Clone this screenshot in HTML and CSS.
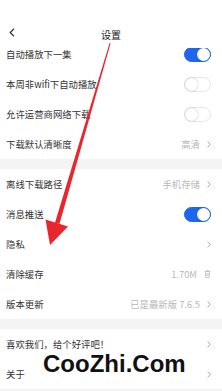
FILE: index.html
```html
<!DOCTYPE html>
<html lang="zh">
<head>
<meta charset="utf-8">
<link rel="stylesheet" href="styles.css">
</head>
<body>
<div class="screen">
  <header class="header">
    <svg class="back" width="6" height="9" viewBox="0 0 6 9"><polyline points="5,0.8 1.2,4.5 5,8.2" fill="none" stroke="#333" stroke-width="1.2"/></svg>
    <div class="title">设置</div>
  </header>
  <div class="viewport">
    <div class="scroller">
      <section class="group">
        <div class="row"><span class="label">自动播放下一集</span><span class="switch on"><i></i></span></div>
        <div class="row"><span class="label">本周非wifi下自动播放</span><span class="switch"><i></i></span></div>
        <div class="row"><span class="label">允许运营商网络下载</span><span class="switch"><i></i></span></div>
        <div class="row"><span class="label">下载默认清晰度</span><span class="value">高清<svg class="chev" width="4" height="7" viewBox="0 0 4 7"><polyline points="0.6,0.6 3.3,3.5 0.6,6.4" fill="none" stroke="#aaa" stroke-width="1"/></svg></span></div>
      </section>
      <section class="group">
        <div class="row"><span class="label">离线下载路径</span><span class="value">手机存储<svg class="chev" width="4" height="7" viewBox="0 0 4 7"><polyline points="0.6,0.6 3.3,3.5 0.6,6.4" fill="none" stroke="#aaa" stroke-width="1"/></svg></span></div>
        <div class="row"><span class="label">消息推送</span><span class="switch on"><i></i></span></div>
        <div class="row"><span class="label">隐私</span><span class="value"><svg class="chev" width="4" height="7" viewBox="0 0 4 7"><polyline points="0.6,0.6 3.3,3.5 0.6,6.4" fill="none" stroke="#aaa" stroke-width="1"/></svg></span></div>
        <div class="row"><span class="label">清除缓存</span><span class="value">1.70M<svg class="trash" width="7" height="8" viewBox="0 0 7 8"><path d="M0.5 1.5H6.5M2.5 1.5V0.6H4.5V1.5M1.3 1.5L1.7 7.4H5.3L5.7 1.5M2.8 3V6M4.2 3V6" fill="none" stroke="#bbb" stroke-width="0.8"/></svg></span></div>
        <div class="row"><span class="label">版本更新</span><span class="value">已是最新版 7.6.5<svg class="chev" width="4" height="7" viewBox="0 0 4 7"><polyline points="0.6,0.6 3.3,3.5 0.6,6.4" fill="none" stroke="#aaa" stroke-width="1"/></svg></span></div>
      </section>
      <section class="group">
        <div class="row"><span class="label">喜欢我们，给个好评吧！</span><span class="value"><svg class="chev" width="4" height="7" viewBox="0 0 4 7"><polyline points="0.6,0.6 3.3,3.5 0.6,6.4" fill="none" stroke="#aaa" stroke-width="1"/></svg></span></div>
        <div class="row"><span class="label">关于</span><span class="value"><svg class="chev" width="4" height="7" viewBox="0 0 4 7"><polyline points="0.6,0.6 3.3,3.5 0.6,6.4" fill="none" stroke="#aaa" stroke-width="1"/></svg></span></div>
      </section>
    </div>
  </div>
  <svg class="arrow" width="222" height="391" viewBox="0 0 222 391">
    <polygon points="109.6,43 110.6,43.3 59.5,224 55,222.8" fill="#e8262b"/>
    <polygon points="50,245 45.5,219.5 68,226.5" fill="#e8262b"/>
  </svg>
  <div class="watermark">CooZhi.Com</div>
</div>
</body>
</html>
```
FILE: styles.css
```css
* { box-sizing: border-box; }
html, body { margin: 0; padding: 0; }
body {
  width: 222px;
  height: 391px;
  overflow: hidden;
  background: #f4f4f4;
  font-family: "Noto Sans CJK SC", "Noto Sans", sans-serif;
  color: #333;
}
.screen {
  position: relative;
  width: 222px;
  height: 391px;
  display: flex;
  flex-direction: column;
}
.header {
  height: 48px;
  flex: none;
  background: #fff;
  position: relative;
  z-index: 2;
  display: flex;
  align-items: center;
  padding: 20px 0 0 9px;
}
.back { display: block; margin-top: -3px; }
.title {
  position: absolute;
  left: 0;
  right: 0;
  top: 28px;
  text-align: center;
  font-size: 10px;
  line-height: 14px;
  color: #222;
}
.viewport {
  flex: 1;
  overflow: hidden;
}
.scroller {
  margin-top: -9px;
  display: flex;
  flex-direction: column;
  gap: 10px;
}
.group {
  background: #fff;
  display: flex;
  flex-direction: column;
}
.row {
  height: 30px;
  display: flex;
  align-items: center;
  justify-content: space-between;
  padding: 0 11px 0 6px;
}
.label {
  font-size: 9.4px;
  line-height: 12px;
  color: #333;
}
.value {
  display: flex;
  align-items: center;
  gap: 7px;
  font-size: 9.4px;
  line-height: 12px;
  color: #b8b8b8;
}
.chev { display: block; }
.trash { display: block; }
.switch {
  width: 27px;
  height: 15px;
  border-radius: 8px;
  background: #fff;
  border: 1px solid #e6e6e6;
  display: flex;
  align-items: center;
  padding: 0;
}
.switch i {
  width: 13px;
  height: 13px;
  border-radius: 50%;
  background: #fff;
  box-shadow: 0 0 1.5px rgba(0,0,0,0.35);
  display: block;
}
.switch.on {
  background: #1f66ee;
  border-color: #1f66ee;
  justify-content: flex-end;
}
.arrow {
  position: absolute;
  left: 0;
  top: 0;
  z-index: 3;
}
.watermark {
  position: absolute;
  left: 43px;
  top: 352px;
  z-index: 4;
  font-family: "Liberation Sans", Arial, sans-serif;
  font-weight: bold;
  font-size: 24px;
  line-height: 24px;
  color: #111;
}
```
